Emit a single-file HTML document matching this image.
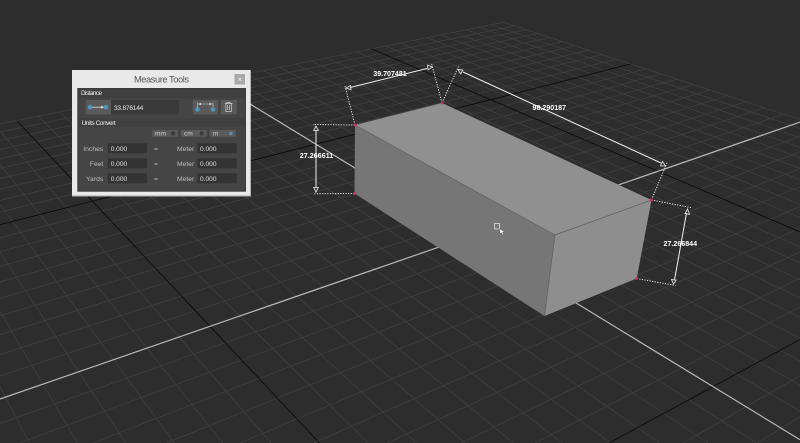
<!DOCTYPE html>
<html><head><meta charset="utf-8"><style>
html,body{margin:0;padding:0;background:#2d2d2d;width:800px;height:443px;overflow:hidden}
svg{display:block;position:absolute;left:0;top:0}
text{font-family:"Liberation Sans",sans-serif}
</style></head><body>
<svg id="s" xmlns="http://www.w3.org/2000/svg" width="800" height="443" viewBox="0 0 800 443">
<rect width="800" height="443" fill="#2d2d2d"/>
<clipPath id="c"><rect width="800" height="443"/></clipPath>
<g clip-path="url(#c)"><g style="filter:blur(.3px)">
<g id="grid"></g>
<g id="box">
<polygon points="355,125 442,103 651.5,200 555,235" fill="#909090"/>
<polygon points="355,125 555,235 544.5,316 354.5,193.5" fill="#767676"/>
<polygon points="555,235 651.5,200 636.7,278.5 544.5,316" fill="#8e8e8e"/>
<path d="M355 125L555 235M555 235L651.5 200M555 235L544.5 316" stroke="#606060" stroke-width=".7" fill="none"/>
</g>
</g>
<g style="filter:blur(.2px)">
<g fill="none" stroke="#eee" stroke-width=".9" stroke-dasharray="1.3 1.3">
<path d="M355 125L345 86M442 103L431.7 64M442 103L458.5 66.5M651.5 200L667 163M355 125L313 124.5M354.5 193.5L313 193.8M651.5 200L691 207.5M636.7 278.5L675.5 285.5"/>
</g>
<g fill="none" stroke="#f0f0f0" stroke-width="1">
<path d="M350 87.5L427 68.5M463 72L661 163M316 130V188M686.5 213L674.5 280"/>
<path stroke="#dcdcdc" stroke-width=".9" d="M346 88L350.5 85.5L351 89.7ZM432.5 67L427.5 65.2L428 69.8ZM458 69.5L462.8 70L460.7 74ZM665.5 166L660.5 165.8L662.5 161.5ZM316 126L313.7 130.6H318.3ZM316 192L313.7 187.4H318.3ZM687.5 209L685 213.6L689.5 214.3ZM673.5 284L671.5 279.5L676 280.2Z"/>
</g>
<g fill="#d62a62">
<path d="M353.8 123.8h2.5v2.5h-2.5zM440.9 101.8h2.5v2.5h-2.5zM650.2 198.8h2.5v2.5h-2.5zM635.4 277.2h2.5v2.5h-2.5zM353.2 192.2h2.5v2.5h-2.5z"/>
</g>
<g font-size="7.1" font-weight="bold" fill="#fff" text-anchor="middle">
<text x="390" y="76" textLength="33.5">39.707481</text>
<text x="549.3" y="110.2" textLength="33.5">98.290187</text>
<text x="316.5" y="158.2" textLength="33.5">27.266611</text>
<text x="680.3" y="245.8" textLength="33.5">27.266844</text>
</g>
<!-- cursor -->
<rect x="494.5" y="223.5" width="5" height="5.5" fill="none" stroke="#d8d8d8" stroke-width=".9"/>
<path d="M499.5 228.5L504.5 232L502.5 232.3L504 234.5L502.7 235L501.3 232.8L499.8 234Z" fill="#fff" stroke="#333" stroke-width=".4"/>
</g>
<!-- panel -->
<g style="filter:blur(.25px)">
<rect x="72" y="70" width="178.7" height="126.5" fill="#e9e9e9"/>
<rect x="72" y="195.6" width="178.7" height="1" fill="#9a9a9a"/>
<text x="161.5" y="82.5" font-size="9.3" fill="#555" text-anchor="middle" textLength="55">Measure Tools</text>
<rect x="234.5" y="74" width="10.5" height="10.5" fill="#a9a9a9"/>
<path d="M238.3 77.8l3 3m0-3l-3 3" stroke="#e8e8e8" stroke-width=".8"/>
<rect x="77.3" y="88" width="168.7" height="103.7" fill="#3c3c3c"/>
<rect x="78.5" y="89" width="166.3" height="101.5" fill="#454545"/>
<rect x="78.5" y="89" width="166.3" height="9" fill="#3f3f3f"/>
<rect x="78.5" y="118" width="166.3" height="9" fill="#404040"/>
<text x="81" y="95.2" font-size="6.3" fill="#f0f0f0" textLength="21">Distance</text>
<rect x="85.7" y="100" width="25.3" height="14.3" fill="#5a5a5a"/>
<rect x="111" y="100" width="68" height="14.3" fill="#3a3a3a"/>
<circle cx="90" cy="107.2" r="2.3" fill="#4f97c0"/>
<circle cx="106" cy="107.2" r="2.3" fill="#4f97c0"/>
<path d="M92 107.2h11" stroke="#ddd" stroke-width=".8"/><path d="M104.2 107.2l-3-1.6v3.2z" fill="#ddd"/>
<text x="114" y="110" font-size="6.6" fill="#e2e2e2" textLength="29.3">33.876144</text>
<rect x="192.7" y="100" width="25.3" height="14.3" fill="#5a5a5a"/>
<path d="M197.5 102.5v5M213 102.5v5M198 104h14.5" stroke="#ccc" stroke-width=".6" fill="none"/>
<path d="M198.5 104l2.5-1.2v2.4zM212 104l-2.5-1.2v2.4z" fill="#ddd"/>
<circle cx="197.5" cy="109.5" r="2.2" fill="#4f97c0"/>
<circle cx="213" cy="109.5" r="2.2" fill="#4f97c0"/>
<rect x="220.7" y="100" width="16" height="14.3" fill="#5a5a5a"/>
<path d="M224.8 103.5h7.6M227 103.5v-1h3.2v1M225.8 103.5v8h5.6v-8M227.6 105v5M229.6 105v5" stroke="#cfcfcf" stroke-width=".7" fill="none"/>
<text x="81.7" y="124.8" font-size="6.3" fill="#f0f0f0" textLength="34">Units Convert</text>
<g fill="#5b5b5b"><rect x="152.3" y="130" width="25.4" height="6.8"/><rect x="181" y="130" width="25.7" height="6.8"/><rect x="210" y="130" width="25.7" height="6.8"/></g>
<g font-size="6.6" fill="#d0d0d0"><text x="155" y="135.6">mm</text><text x="184" y="135.6">cm</text><text x="213" y="135.6">m</text></g>
<circle cx="173" cy="133.4" r="2.2" fill="#3a3a3a"/><circle cx="201.7" cy="133.4" r="2.2" fill="#3a3a3a"/><circle cx="230.8" cy="133.4" r="1.7" fill="#4f97c0"/>
<g fill="#333"><rect x="107.7" y="143.3" width="39.3" height="10"/><rect x="197.3" y="143.3" width="39.4" height="10"/><rect x="107.7" y="158.3" width="39.3" height="10"/><rect x="197.3" y="158.3" width="39.4" height="10"/><rect x="107.7" y="173.3" width="39.3" height="10"/><rect x="197.3" y="173.3" width="39.4" height="10"/></g>
<g font-size="6.8" fill="#bdbdbd" text-anchor="end"><text x="103.3" y="151">Inches</text><text x="103.3" y="166">Feet</text><text x="103.3" y="181">Yards</text></g>
<g font-size="6.8" fill="#bdbdbd" text-anchor="middle"><text x="156" y="151">=</text><text x="156" y="166">=</text><text x="156" y="181">=</text></g>
<g font-size="6.8" fill="#bdbdbd"><text x="177" y="151" textLength="17.3">Meter</text><text x="177" y="166" textLength="17.3">Meter</text><text x="177" y="181" textLength="17.3">Meter</text></g>
<g font-size="6.6" fill="#e0e0e0"><text x="110.7" y="151">0.000</text><text x="200" y="151">0.000</text><text x="110.7" y="166">0.000</text><text x="200" y="166">0.000</text><text x="110.7" y="181">0.000</text><text x="200" y="181">0.000</text></g>
</g></g>
</svg>
<script>
var O=[468,237],VA=[-333,-252],VB=[1910,-262],S=.1518,T=.2343;
function P(u,v){var a=u*S,b=v*T,d=1+a+b;return [(O[0]+a*VB[0]+b*VA[0])/d,(O[1]+a*VB[1]+b*VA[1])/d];}
function L(a,b){var t0=0,t1=1,dx=b[0]-a[0],dy=b[1]-a[1],p=[-dx,dx,-dy,dy],q=[a[0],800-a[0],a[1],443-a[1]];
 for(var i=0;i<4;i++){if(p[i]===0){if(q[i]<0)return '';continue;}var r=q[i]/p[i];if(p[i]<0){if(r>t1)return '';if(r>t0)t0=r;}else{if(r<t0)return '';if(r<t1)t1=r;}}
 return 'M'+(a[0]+t0*dx).toFixed(1)+' '+(a[1]+t0*dy).toFixed(1)+'L'+(a[0]+t1*dx).toFixed(1)+' '+(a[1]+t1*dy).toFixed(1);}
var minor='',major='',axis='',N=10;
for(var i=-2*N;i<=2*N;i++){
  var k=i/N,l=L(P(k,-2),P(k,2))+L(P(-2,k),P(2,k));
  if(i===0)axis+=l;else if(Math.abs(i)===N)major+=l;else minor+=l;
}
document.getElementById('grid').innerHTML=
'<path d="'+minor+'" stroke="#404040" stroke-width=".75" fill="none"/>'+
'<path d="'+major+'" stroke="#0c0c0c" stroke-width=".9" fill="none"/>'+
'<path d="'+axis+'" stroke="#b8b8b8" stroke-width="1.2" fill="none"/>';
</script>
</body></html>
